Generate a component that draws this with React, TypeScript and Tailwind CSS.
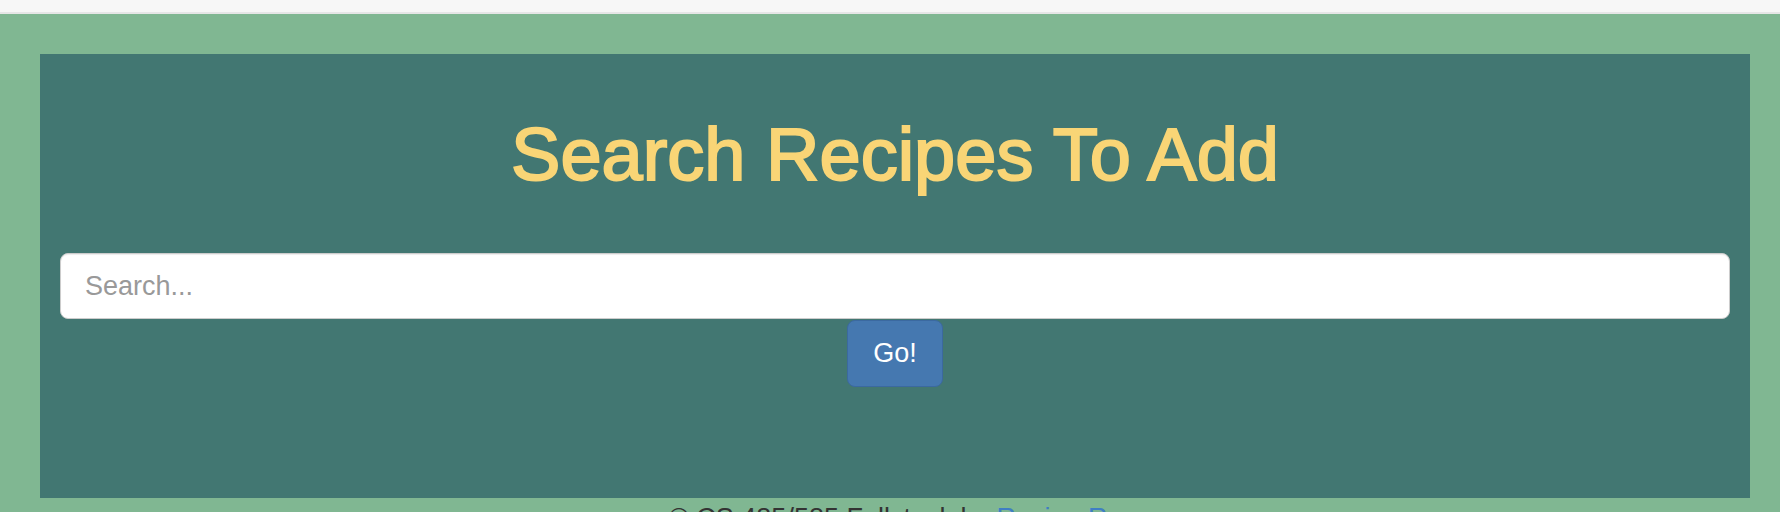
import React from "react";

export default function App() {
  return (
    <div
      className="min-h-screen bg-[#80b792]"
      style={{ fontFamily: '"Liberation Sans", Arial, sans-serif' }}
    >
      <div className="h-[14px] bg-[#f7f7f7] border-b-2 border-[#e6e6e6]" />
      <div className="pt-[40px] pl-[40px] pr-[30px]">
        <div className="h-[444px] bg-[#427772] pt-[61px]">
          <h1 className="text-center text-[74px] leading-[80px] text-[#f9d576] font-normal [-webkit-text-stroke:2px_#f9d576]">
            Search Recipes To Add
          </h1>
          <div className="mt-[58px] mx-[20px]">
            <input
              type="text"
              placeholder="Search..."
              className="block w-full h-[66px] rounded-[8px] border-[1.5px] border-[#cccccc] bg-white px-[24px] text-[27px] text-[#555] placeholder:text-[#999] shadow-[inset_0_1px_1px_rgba(0,0,0,0.075)] outline-none"
            />
          </div>
          <div className="flex justify-center mt-[1px]">
            <button className="w-[96px] h-[67px] rounded-[8px] border-[1.5px] border-[#3b69a0] bg-[#4578b0] text-white text-[27px]">
              Go!
            </button>
          </div>
        </div>
        <div className="text-center text-[27px] leading-[40px] text-[#333]">
          © CS 485/585 Fullstack by{" "}
          <a href="#" className="text-[#3f7ec4]">
            Recipe Rx
          </a>
        </div>
      </div>
    </div>
  );
}
